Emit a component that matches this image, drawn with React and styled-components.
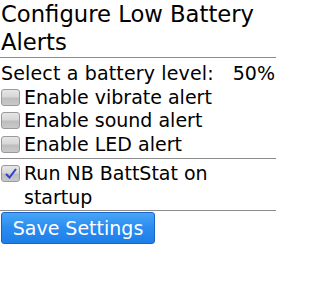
import React from 'react';
import styled, { createGlobalStyle } from 'styled-components';

const GlobalStyle = createGlobalStyle`
    body {
        margin: 0;
        background: #fff;
        color: #000;
        font-family: "DejaVu Sans", "Noto Sans", sans-serif;
    }
`;

const Screen = styled.div`
    width: 276px;
`;

const Title = styled.h1`
    margin: 0;
    padding: 0 0 1px 1px;
    font-size: 22.7px;
    font-weight: normal;
    line-height: 28px;
    border-bottom: 1px solid #8c8c8c;
`;

const Section = styled.div`
    padding: ${props => props.top || 4}px 0 ${props => props.bottom || 2}px;
    border-bottom: 1px solid #8c8c8c;
`;

const Row = styled.div`
    display: flex;
    align-items: flex-start;
    font-size: 19px;
    line-height: 23.5px;
`;

const Label = styled.span`
    flex: 1;
    padding-left: 1px;
    letter-spacing: 0.15px;
`;

const Value = styled.span`
    padding-right: 1px;
`;

const Box = styled.span`
    flex: none;
    position: relative;
    width: 17px;
    height: 15px;
    margin: 3px 4px 0 1px;
    border: 1px solid #9a9a9a;
    border-radius: 3px;
    background: linear-gradient(#e6e6e6 0%, #d6d6d6 48%, #bdbdbd 52%, #c9c9c9 100%);
    svg {
        position: absolute;
        left: 2px;
        top: 1px;
    }
`;

const Text = styled.span`
    flex: 1;
`;

const SaveButton = styled.button`
    display: block;
    margin: 1px 0 0 1px;
    width: 154px;
    height: 32px;
    padding: 0;
    border: 1px solid #1c64c4;
    border-radius: 3px;
    background: linear-gradient(#47a6f7, #2a8bf0 50%, #1e7ee8);
    color: #fff;
    font-family: inherit;
    font-size: 19px;
`;

const Checkbox = ({ checked }) => (
    <Box>
        {checked && (
            <svg width="14" height="13" viewBox="0 0 14 13">
                <path d="M2 7 L5.5 10.5 L12 2" fill="none" stroke="#2b3fd0" strokeWidth="2" />
            </svg>
        )}
    </Box>
);

const CheckRow = ({ checked, children }) => (
    <Row>
        <Checkbox checked={checked} />
        <Text>{children}</Text>
    </Row>
);

const App = () => (
    <Screen>
        <GlobalStyle />
        <Title>Configure Low Battery Alerts</Title>
        <Section>
            <Row>
                <Label>Select a battery level:</Label>
                <Value>50%</Value>
            </Row>
            <CheckRow>Enable vibrate alert</CheckRow>
            <CheckRow>Enable sound alert</CheckRow>
            <CheckRow>Enable LED alert</CheckRow>
        </Section>
        <Section top={3} bottom={1}>
            <CheckRow checked>Run NB BattStat on startup</CheckRow>
        </Section>
        <SaveButton>Save Settings</SaveButton>
    </Screen>
);

export default App;
